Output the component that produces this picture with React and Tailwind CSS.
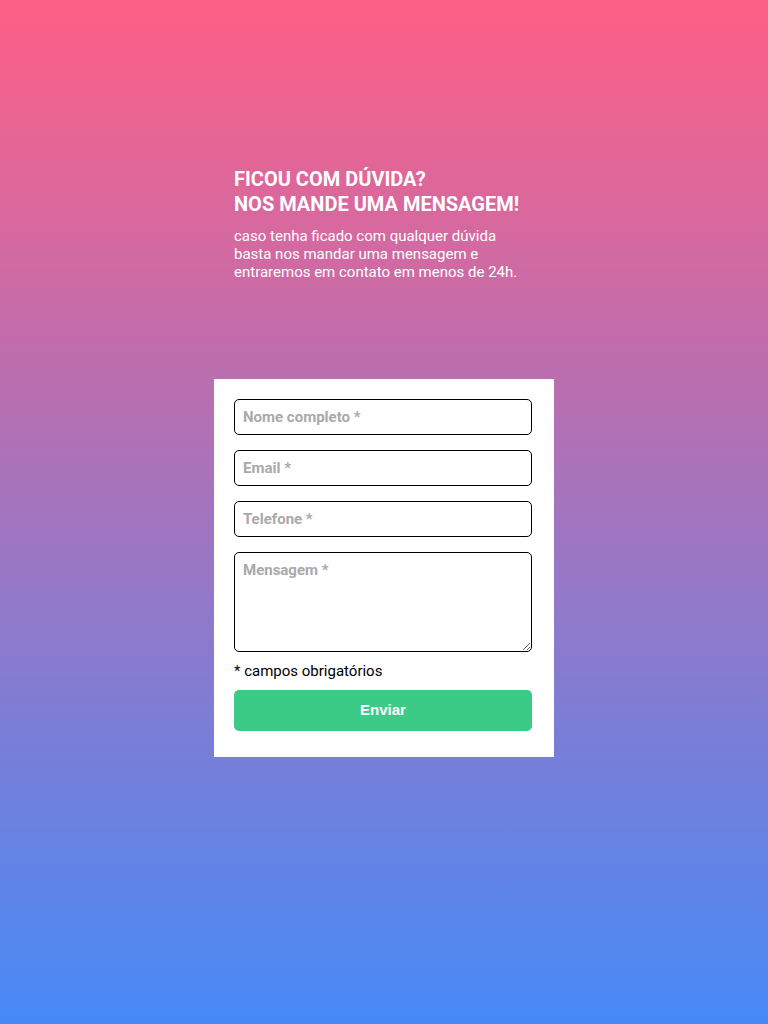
import React from 'react';

function App() {
  const inputClass =
    'w-[298px] h-[36px] rounded-[5px] border border-black bg-white px-2 text-[15px] font-bold text-gray-800 outline-none placeholder:text-[#a9a9a9]';

  return (
    <div className="min-h-screen w-full bg-linear-to-b/srgb from-[#ff5f85] to-[#468af7] font-['Roboto',sans-serif]">
      <div className="mx-auto w-[340px] pt-[167px]">
        {/* Heading */}
        <div className="px-5 text-white">
          <h1 className="text-[20px] font-bold leading-[25px] uppercase">
            Ficou com dúvida?
            <br />
            Nos mande uma mensagem!
          </h1>
          <p className="mt-[10px] pr-[10px] text-[15px] leading-[18px]">
            caso tenha ficado com qualquer dúvida basta nos mandar uma mensagem e entraremos em contato em menos de 24h.
          </p>
        </div>

        {/* Form card */}
        <form className="mt-[98px] flex flex-col bg-white px-5 pt-5 pb-[26px]">
          <input className={inputClass} placeholder="Nome completo *" />
          <input className={`${inputClass} mt-[15px]`} placeholder="Email *" />
          <input className={`${inputClass} mt-[15px]`} placeholder="Telefone *" />
          <textarea
            className="mt-[15px] h-[100px] w-[298px] rounded-[5px] border border-black bg-white px-2 py-[8px] text-[15px] leading-[18px] font-bold text-gray-800 outline-none placeholder:text-[#a9a9a9]"
            placeholder="Mensagem *"
          />
          <span className="mt-[9px] text-[15px] leading-[20px] text-black">* campos obrigatórios</span>
          <button
            type="button"
            className="mt-[9px] h-[41px] w-[298px] rounded-[5px] bg-[#3ccb87] text-[15px] font-bold text-white font-['Liberation_Sans',sans-serif]"
          >
            Enviar
          </button>
        </form>
      </div>
    </div>
  );
}

export default App;
